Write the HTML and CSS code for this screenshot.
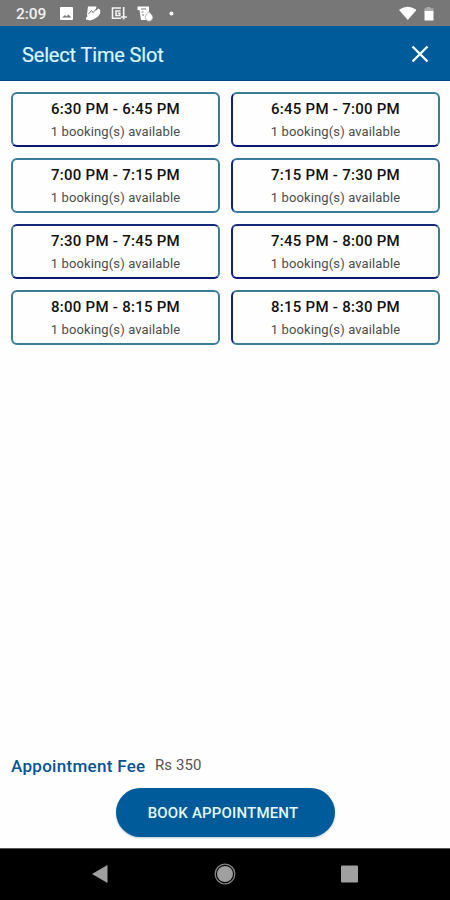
FILE: index.html
```
<!DOCTYPE html>
<html lang="en">
<head>
<meta charset="utf-8">
<title>Select Time Slot</title>
<link rel="stylesheet" href="styles.css">
</head>
<body>
<div class="screen">
  <div class="status">
    <span class="clock">2:09</span>
    <svg class="notifications" width="120" height="18" viewBox="0 0 120 18">
      <g fill="#fff">
        <path fill-rule="evenodd" d="M2 3h10q1 0 1 1v11q0 1-1 1H1q-1 0-1-1V4q0-1 1-1zM2 13.500h9.500L8.500 10.500 6.500 12.500 5 11z"/>
        <path d="M28 2.500h8.500l-1 4.500 3-2.500 1.700 1.500v3.500q-2 4-6 5.500L30 16.500l-4-1v-2l1.500-1-.5-2z"/>
        <path d="M28.500 10l3-3.500 1.500 2.200 3.500-4" fill="none" stroke="#777" stroke-width="1"/>
        <path fill-rule="evenodd" d="M77.500 2.500h11.500v7l-2 6.500h-6l-1.500-10h-2zM81 4.500v1h5v-1zM81.500 7.500v1h2v-1zM82 10.500v1h2v-1z"/>
        <path d="M89 7.500l3 3.500a3.800 3.800 0 1 1-6 0z" stroke="#777" stroke-width=".5"/>
        <circle cx="111.500" cy="9.500" r="2"/>
      </g>
      <path d="M61 4H52.500v10.200H61M60.500 7h-4.500v4.500h3.800V9.200h-2M63.700 3v12.500M61 13h6" fill="none" stroke="#f4f4f4" stroke-width="1.600"/>
    </svg>
    <svg class="signals" width="36" height="18" viewBox="0 0 36 18">
      <path d="M.5 3.500Q8.500-2 17 3.500v1L8.800 14 .5 4.500z" fill="#fff"/>
      <path d="M27.500 1h4v1.200h3V5.500h-9V2.200h2z" fill="#a9a9a9"/>
      <path d="M25.500 5h9v9.500h-9z" fill="#fff"/>
    </svg>
  </div>
  <header class="bar">
    <h1>Select Time Slot</h1>
    <svg width="18" height="18" viewBox="0 0 18 18"><path d="M1.500 1.500l15 15M16.500 1.500l-15 15" stroke="#effcff" stroke-width="2.400"/></svg>
  </header>
  <main class="slots">
    <div class="slot deep"><b>6:30 PM - 6:45 PM</b><span>1 booking(s) available</span></div>
    <div class="slot deep right"><b>6:45 PM - 7:00 PM</b><span>1 booking(s) available</span></div>
    <div class="slot"><b>7:00 PM - 7:15 PM</b><span>1 booking(s) available</span></div>
    <div class="slot right"><b>7:15 PM - 7:30 PM</b><span>1 booking(s) available</span></div>
    <div class="slot deep top"><b>7:30 PM - 7:45 PM</b><span>1 booking(s) available</span></div>
    <div class="slot deep top right"><b>7:45 PM - 8:00 PM</b><span>1 booking(s) available</span></div>
    <div class="slot"><b>8:00 PM - 8:15 PM</b><span>1 booking(s) available</span></div>
    <div class="slot right"><b>8:15 PM - 8:30 PM</b><span>1 booking(s) available</span></div>
  </main>
  <div class="fee"><span class="fee-label">Appointment Fee</span><span class="fee-value">Rs 350</span></div>
  <button class="book">BOOK APPOINTMENT</button>
  <nav class="nav">
    <svg width="450" height="51" viewBox="0 0 450 51">
      <path d="M92 25L107.500 16v18z" fill="#a0a0a0"/>
      <circle cx="225" cy="25" r="9.800" fill="none" stroke="#858585" stroke-width="1.300"/>
      <circle cx="225" cy="25" r="8" fill="#a0a0a0"/>
      <rect x="341" y="16.500" width="17" height="17" rx="1" fill="#a0a0a0"/>
    </svg>
  </nav>
</div>
</body>
</html>
```
FILE: styles.css
```
* { box-sizing: border-box; }
body { margin: 0; font-family: Roboto, "Liberation Sans", sans-serif; }
.screen { width: 450px; height: 900px; display: flex; flex-direction: column; background: #fefefe; overflow: hidden; }
svg { display: block; }
.status { height: 26px; flex: none; display: flex; align-items: flex-start; padding: 4px 15px 0 16px; background: #777; }
.clock { width: 44px; font-size: 15.5px; line-height: 21px; font-weight: 500; letter-spacing: -.1px; color: #f0f0f0; }
.signals { margin-left: auto; margin-top: 2px; }
.bar { height: 55px; flex: none; display: flex; align-items: center; justify-content: space-between; padding: 1px 21px 0 22px; background: #005b9b; border-bottom: 1px solid #004489; }
.bar h1 { margin: 2px 0 0; font-size: 20px; line-height: 24px; font-weight: 400; letter-spacing: -.16px; color: #d9f6ff; -webkit-text-stroke: .2px #d9f6ff; }
.slots { flex: 1; display: grid; grid-template-columns: 209px 209px; grid-auto-rows: 55px; gap: 10.9px 11px; padding: 11px 10px 0 11px; align-content: start; }
.slot { display: flex; flex-direction: column; align-items: center; padding-top: 6px; border: 2px solid #3b7d99; border-radius: 6px; white-space: nowrap; }
.slot.deep { border-bottom-color: #071879; }
.slot.top { border-top-color: #172778; }
.slot.right { border-left-color: #102380; }
.slot b { font-size: 15px; line-height: 19px; font-weight: 500; letter-spacing: .26px; color: #111; }
.slot span { margin-top: 4px; font-size: 13px; line-height: 18px; letter-spacing: .12px; color: #4c4c4c; }
.fee { flex: none; height: 34px; display: flex; align-items: flex-start; padding-left: 11px; }
.fee-label { width: 144px; padding-top: 2px; font-size: 17px; line-height: 20px; font-weight: 500; letter-spacing: .3px; color: #075394; white-space: nowrap; }
.fee-value { padding-top: 1px; font-size: 15px; line-height: 20px; letter-spacing: .1px; color: #555; }
.book { flex: none; width: 219px; height: 49px; margin: 0 0 11px 116px; padding: 1px 5px 0 0; border: 0; border-radius: 25px; background: #005b9b; color: #e4f8ff; font: 500 15px/48px Roboto, sans-serif; letter-spacing: .18px; box-shadow: 0 1px 2px #b9c9d4; }
.nav { height: 52px; flex: none; background: #000; border-top: 1px solid #555; }
```
